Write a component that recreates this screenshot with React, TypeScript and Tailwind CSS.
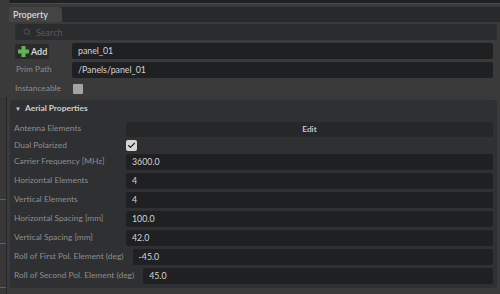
import { Search, Check } from 'lucide-react';

const rows = [
  { label: 'Carrier Frequency [MHz]', value: '3600.0' },
  { label: 'Horizontal Elements', value: '4' },
  { label: 'Vertical Elements', value: '4' },
  { label: 'Horizontal Spacing [mm]', value: '100.0' },
  { label: 'Vertical Spacing [mm]', value: '42.0' },
  { label: 'Roll of First Pol. Element (deg)', value: '-45.0' },
  { label: 'Roll of Second Pol. Element (deg)', value: '45.0' },
];

function Field({ value }: { value: string }) {
  return (
    <div className="flex-1 h-[16px] bg-[#1f2022] rounded-[2px] flex items-center pl-[6px] text-[#d4d4d4] text-[8.8px]">
      {value}
    </div>
  );
}

export default function App() {
  return (
    <div
      className="w-[500px] h-[294px] bg-[#3a3a3a] flex overflow-hidden text-[8.4px] leading-none"
      style={{ fontFamily: 'Lato, "Open Sans", sans-serif' }}
    >
      {/* left gutter */}
      <div className="w-[9px] flex flex-col">
        <div className="h-[97px]" />
        <div className="flex-1 flex flex-col border-r border-[#262626] mr-[2px] bg-[#373737]">
          <div className="h-[103px] border-b border-[#3f7a3a]" />
          <div className="h-[44px] border-b border-[#3f7a3a]" />
          <div className="h-[44px] border-b border-[#3f7a3a]" />
        </div>
      </div>

      <div className="flex-1 flex flex-col">
        {/* top strip */}
        <div className="h-[4px] bg-[#202123] border-b border-[#4a4a4a] rounded-bl-[3px]" />
        <div className="h-[3px]" />

        {/* tab bar */}
        <div className="h-[15px] flex bg-[#28292b]">
          <div className="w-[53px] bg-[#444444] rounded-tr-[4px] text-[#d8d8d8] font-semibold text-[9px] flex items-center pl-[4px]">
            Property
          </div>
        </div>

        {/* body */}
        <div className="flex-1 flex flex-col pt-[2px]">
          <div className="flex flex-col gap-[3px] pl-[6px] pr-[7px]">
            <div className="h-[16px] bg-[#2b2c2e] rounded-[2px] mr-[-4px] flex items-center pl-[8px] gap-[5px] text-[#5a5a5a] text-[9px]">
              <Search size={8} strokeWidth={2.5} className="text-[#5a5a5a]" />
              <span>Search</span>
            </div>
            <div className="h-[16px] flex items-center">
              <div className="w-[34px] h-[15px] bg-[#2a2a2a] rounded-[2px] flex items-center pl-[3px] gap-[2px] text-[#e0e0e0] font-semibold text-[9px]">
                <svg width="11" height="11" viewBox="0 0 11 11">
                  <rect x="3.5" y="0" width="4" height="11" fill="#62b352" />
                  <rect x="0" y="3.5" width="11" height="4" fill="#62b352" />
                </svg>
                <span>Add</span>
              </div>
              <div className="w-[23px]" />
              <Field value="panel_01" />
            </div>
            <div className="h-[16px] flex items-center">
              <div className="w-[57px] pl-[1px] text-[#8c8c8c] pb-[1px]">Prim Path</div>
              <Field value="/Panels/panel_01" />
            </div>
            <div className="h-[16px] flex items-center">
              <div className="w-[58px] text-[#8c8c8c] pb-[1px]">Instanceable</div>
              <div className="w-[10px] h-[10px] bg-[#a4a4a4] rounded-[1px]" />
            </div>
          </div>

          {/* Aerial section */}
          <div className="mt-[3px] ml-[1px] mr-[3px] h-[188px] bg-[#2f3031] rounded-[3px] flex flex-col">
            <div className="h-[17px] flex items-center pl-[5px] gap-[4px] text-[#d0d0d0] font-bold">
              <span className="text-[6px]">▼</span>
              <span>Aerial Properties</span>
            </div>
            <div className="flex flex-col gap-[3px] pt-[4px] pl-[4px] pr-[4px] text-[#8e8e8e]">
              <div className="h-[16px] flex items-center">
                <div className="min-w-[112px] pr-[8px] pb-[2px]">Antenna Elements</div>
                <div className="flex-1 h-[15px] bg-[#262728] rounded-[2px] flex items-center justify-center text-[#d0d0d0] font-semibold">
                  Edit
                </div>
              </div>
              <div className="h-[11px] flex items-center">
                <div className="min-w-[112px] pr-[8px]">Dual Polarized</div>
                <div className="w-[11px] h-[11px] bg-[#d6d6d6] rounded-[2px] flex items-center justify-center">
                  <Check size={9} strokeWidth={3} className="text-[#222]" />
                </div>
              </div>
              {rows.map((r) => (
                <div key={r.label} className="h-[16px] flex items-center">
                  <div className="min-w-[112px] pr-[9px] pb-[2px] whitespace-nowrap">{r.label}</div>
                  <Field value={r.value} />
                </div>
              ))}
            </div>
          </div>
        </div>
      </div>
    </div>
  );
}
